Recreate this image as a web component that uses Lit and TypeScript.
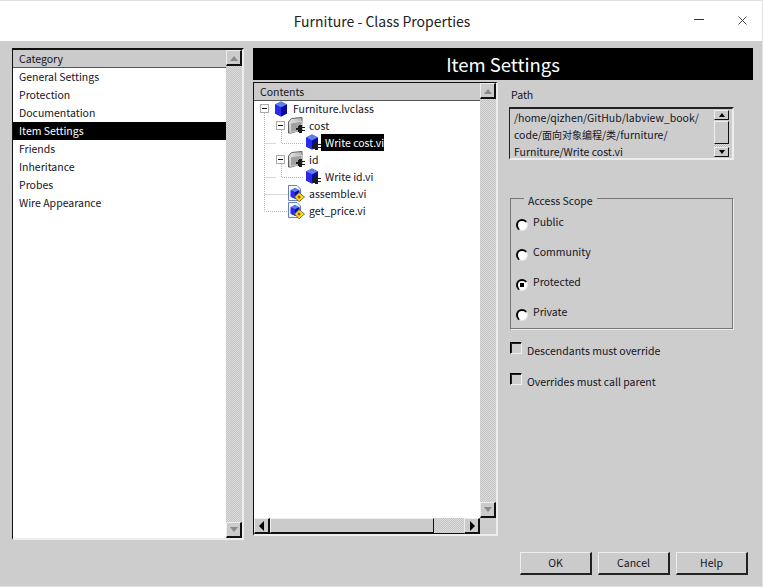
import { LitElement, html, css, svg } from "lit";
import { customElement } from "lit/decorators.js";

const cube = (x: number, y: number, s: number) => svg`
  <g transform="translate(${x} ${y}) scale(${s})">
    <path d="M7 0 L13 3 V12 L7 15 L1 12 V3 Z" fill="#1616d8"/>
    <path d="M7 0 L13 3 L7 6 L1 3 Z" fill="#5f7ff0"/>
    <path d="M7 6 L13 3 V12 L7 15 Z" fill="#0a0a9c"/>
    <path d="M1 3 L7 6 V15 L1 12 Z" fill="#2a2ae8"/>
  </g>`;
const plug = (x: number, y: number) => svg`
  <g transform="translate(${x} ${y})" fill="#1c1c1c">
    <path d="M0 3 H2 V1 H3 V0 H6 V2 H9 V3 H6 V5 H9 V6 H6 V8 H3 V7 H2 V5 H0 Z"/>
  </g>`;

const CubeIcon = html`<svg class="ico" width="15" height="16" viewBox="0 0 15 16">${cube(0, 0.500, 1)}</svg>`;
const FolderIcon = html`<svg class="ico" width="17" height="17" viewBox="0 0 17 17">
  <defs><linearGradient id="fg" x1="0" y1="0" x2="1" y2="1"><stop offset="0" stop-color="#f4f4f4"/><stop offset="1" stop-color="#808080"/></linearGradient></defs>
  <path d="M.5 5 L3.500 1.500 L14 .5 V13 L3 16 H.5 Z" fill="url(#fg)" stroke="#5e5e5e"/>
  <path d="M2.500 6 L14 4 V13 L2.500 15.500 Z" fill="#a0a0a0" stroke="#e8e8e8" stroke-width=".7"/>
  ${plug(8, 8)}
</svg>`;
const MethodIcon = html`<svg class="ico" width="16" height="17" viewBox="0 0 16 17">${cube(0, 0.500, 1)}${plug(7, 8)}</svg>`;
const ViIcon = html`<svg class="ico" width="17" height="17" viewBox="0 0 17 17">
  <path d="M.5 .5 H9 L12.500 4 V15.500 H.5 Z" fill="#f4f6ff" stroke="#6a7fc0"/>
  ${cube(2, 3, 0.72)}
  <path d="M11 7.500 L16.500 12 L11 16.800 L6.500 12 Z" fill="#f5e010" stroke="#444" stroke-width=".7"/>
  <path d="M9.500 12 H12.500 M11 10.500 V13.500" stroke="#a01010" stroke-width="1"/>
</svg>`;

@customElement("app-root")
export class AppRoot extends LitElement {
  static styles = css`
    :host { display: block; width: 763px; height: 587px; overflow: hidden; background: #cdcdcd;
      font: 10.5px "Noto Sans CJK SC", "Noto Sans", sans-serif; color: #14141f; line-height: 18px;
      border-right: 1px solid #e2e2e2; border-bottom: 1px solid #e2e2e2; box-sizing: border-box; }
    * { box-sizing: border-box; }
    .title { height: 41px; background: #fff; border-top: 1px solid #e2e2e2; display: flex; align-items: center; justify-content: center; position: relative; font-size: 14px; color: #222; padding-left: 2px; }
    .wm { position: absolute; right: 0; top: -1px; height: 41px; width: 92px; }
    .wm svg { display: block; width: 92px; height: 41px; }
    .main { display: flex; padding: 7px 9px 0 12px; gap: 9px; height: 504px; }
    .catbox { width: 232px; height: 492px; display: flex; border: 1px solid; border-color: #111 #eee #eee #111; border-width: 2px 2px 2px 1px; background: #fff; flex: none; }
    .list { flex: 1; min-width: 0; display: flex; flex-direction: column; }
    .hdr { height: 18px; background: #cbcbcb; border-bottom: 1px solid #555; padding-left: 6px; flex: none; line-height: 18px; }
    .row { height: 18px; padding-left: 6px; flex: none; }
    .row.sel { background: #000; color: #fff; }
    .vbar { width: 16px; display: flex; flex-direction: column; flex: none;
      background: repeating-conic-gradient(#c4c4c4 0 25%, #dcdcdc 0 50%) 0 0 / 2px 2px; }
    .vbar i { flex: 1; }
    .btn { width: 16px; height: 16px; flex: none; background: #cbcbcb; border: 1px solid; border-color: #eee #111 #111 #eee; border-width: 1px 2px 2px 1px; display: flex; align-items: center; justify-content: center; }
    .right { flex: 1; display: flex; flex-direction: column; gap: 2px; min-width: 0; }
    .banner { height: 32px; background: #000; color: #fff; font-size: 18.5px; display: flex; align-items: center; justify-content: center; flex: none; }
    .split { display: flex; flex: 1; gap: 11px; min-height: 0; }
    .cbox { width: 245px; height: 454px; border: 1px solid; border-color: #111 #eee #eee #111; border-width: 1px 2px 2px 1px; display: flex; flex-direction: column; background: #fff; flex: none; }
    .ctop { flex: 1; display: flex; min-height: 0; }
    .tree { padding: 0 0 0 6px; flex: 1; min-height: 0; position: relative; }
    .tree-nodes { position: relative; margin-top: -1px; }
    .node { display: flex; align-items: center; height: 17px; white-space: nowrap; }
    .exp { width: 9px; height: 9px; border: 1px solid #aaa; position: relative; flex: none; margin-right: 3px; background: #fff; }
    .exp::after { content: ""; position: absolute; left: 1px; right: 1px; top: 3px; height: 1px; background: #111; }
    .ico { flex: none; margin-right: 4px; }
    .root-exp { margin-right: 5px; }
    .l1 { padding-left: 16px; }
    .l2 { padding-left: 45px; }
    .l2 .ico { margin-right: 0; }
    .l1v { padding-left: 28px; }
    .lines { position: absolute; left: 0; top: 0; pointer-events: none; }
    .sel2 { background: #000; color: #fff; padding-left: 4px; height: 17px; line-height: 17px; }
    .plain { padding-left: 4px; }
    .hbarw { height: 16px; display: flex; flex: none; background: #cdcdcd; }
    .hbar { flex: 1; display: flex; background: repeating-conic-gradient(#c4c4c4 0 25%, #dcdcdc 0 50%) 0 0 / 2px 2px; border-bottom: 1px solid #111; }
    .thumb { width: 164px; background: #cbcbcb; border: 1px solid; border-color: #eee #111 #111 #eee; }
    .hbar i { flex: 1; }
    .corner { width: 16px; flex: none; background: #cdcdcd; }
    .props { width: 225px; display: flex; flex-direction: column; flex: none; }
    .plabel { padding: 4px 0 3px 2px; }
    .pathbox { height: 53px; border: 1px solid; border-color: #222 #eee #eee #222; border-width: 2px 2px 2px 1px; display: flex; padding: 0 0 0 4px; margin-bottom: 38px; overflow: hidden; }
    .ptext { flex: 1; line-height: 17px; white-space: nowrap; }
    .cjk { font-size: 10px; }
    .pbar { width: 15px; margin-right: 3px; display: flex; flex-direction: column; padding-top: 1px; }
    .sm { height: 10px; background: #cbcbcb; border: 1px solid; border-color: #eee #111 #111 #eee; flex: none; display: flex; align-items: center; justify-content: center; }
    .sm2 { height: 23px; margin-top: 1px; background: #cbcbcb; border: 1px solid; border-color: #eee #111 #111 #eee; flex: none; }
    .pgap { height: 3px; flex: none; background: repeating-conic-gradient(#b4b4b4 0 25%, #e4e4e4 0 50%) 0 0 / 2px 2px; }
    .group { height: 132px; border: 1px solid; border-color: #777 #eee #eee #777; box-shadow: inset -1px -1px 0 #777; position: relative; padding: 14px 0 0 5px; display: flex; flex-direction: column; margin-bottom: 12px; margin-left: 1px; }
    .legend { position: absolute; left: 13px; top: -6px; background: #cdcdcd; padding: 0 4px; line-height: 16px; }
    .radio { height: 30px; display: flex; align-items: flex-start; gap: 5px; flex: none; }
    .dot { width: 12px; height: 12px; border-radius: 50%; background: #fff; border: 1px solid; border-color: #000 #e4e4e4 #e4e4e4 #000; border-width: 2px 1px 1px 2px; margin-top: 6px; position: relative; flex: none; }
    .dot.on::after { content: ""; position: absolute; left: 2px; top: 2px; width: 4px; height: 4px; background: #000; }
    .check { display: flex; height: 31px; margin-left: 1px; gap: 5px; }
    .box { width: 12px; height: 12px; background: #cdcdcd; border: 1px solid; border-color: #000 #f0f0f0 #f0f0f0 #000; box-shadow: inset 1px 1px 0 #222; flex: none; }
    .footer { display: flex; justify-content: flex-end; gap: 6px; padding: 7px 14px 0 0; }
    .pb { width: 72px; height: 23px; background: #cbcbcb; border: 1px solid; border-color: #eee #222 #222 #eee; border-width: 1px 2px 2px 1px; display: flex; align-items: center; justify-content: center; line-height: 18px; }
  `;

  private up = html`<svg width="12" height="8" viewBox="0 0 12 8"><path d="M2 7 L6 2 L10 7 Z" fill="#8a8a8a"/></svg>`;
  private down = html`<svg width="12" height="8" viewBox="0 0 12 8"><path d="M2 1 L6 6 L10 1 Z" fill="#8a8a8a"/></svg>`;

  render() {
    const cats = ["General Settings", "Protection", "Documentation", "Item Settings", "Friends", "Inheritance", "Probes", "Wire Appearance"];
    return html`
      <div class="title">Furniture - Class Properties
        <div class="wm">
          <svg viewBox="0 0 92 41"><path d="M24 19.500 H34" stroke="#333"/><path d="M68.500 16.500 L76.500 24.500 M76.500 16.500 L68.500 24.500" stroke="#444" fill="none"/></svg>
        </div>
      </div>
      <div class="main">
        <div class="catbox">
          <div class="list">
            <div class="hdr">Category</div>
            ${cats.map((c) => html`<div class="row ${c === "Item Settings" ? "sel" : ""}">${c}</div>`)}
          </div>
          <div class="vbar"><div class="btn">${this.up}</div><i></i><div class="btn">${this.down}</div></div>
        </div>
        <div class="right">
          <div class="banner">Item Settings</div>
          <div class="split">
            <div class="cbox">
              <div class="ctop">
                <div class="list">
                  <div class="hdr">Contents</div>
                  <div class="tree">
                    <svg class="lines" width="120" height="130"><path d="M10.500 12 V110.500 H34 M10.500 42.500 H22 M10.500 76.500 H22 M27.500 29 V42.500 H50 M27.500 63 V76.500 H50 M10.500 93.500 H34" stroke="#b5b5b5" stroke-dasharray="1 1" fill="none"/></svg>
                    <div class="tree-nodes">
                      <div class="node"><span class="exp root-exp"></span>${CubeIcon}<span>Furniture.lvclass</span></div>
                      <div class="node l1"><span class="exp"></span>${FolderIcon}<span>cost</span></div>
                      <div class="node l2">${MethodIcon}<span class="sel2">Write cost.vi</span></div>
                      <div class="node l1"><span class="exp"></span>${FolderIcon}<span>id</span></div>
                      <div class="node l2">${MethodIcon}<span class="plain">Write id.vi</span></div>
                      <div class="node l1v">${ViIcon}<span>assemble.vi</span></div>
                      <div class="node l1v">${ViIcon}<span>get_price.vi</span></div>
                    </div>
                  </div>
                </div>
                <div class="vbar"><div class="btn">${this.up}</div><i></i><div class="btn">${this.down}</div></div>
              </div>
              <div class="hbarw">
                <div class="hbar">
                  <div class="btn"><svg width="6" height="10" viewBox="0 0 6 10"><path d="M5 0 V10 L0 5 Z" fill="#000"/></svg></div>
                  <div class="thumb"></div><i></i>
                  <div class="btn"><svg width="6" height="10" viewBox="0 0 6 10"><path d="M1 0 V10 L6 5 Z" fill="#000"/></svg></div>
                </div>
                <div class="corner"></div>
              </div>
            </div>
            <div class="props">
              <div class="plabel">Path</div>
              <div class="pathbox">
                <div class="ptext">/home/qizhen/GitHub/labview_book/<br>code/<span class="cjk">面向对象编程</span>/<span class="cjk">类</span>/furniture/<br>Furniture/Write cost.vi</div>
                <div class="pbar">
                  <div class="sm"><svg width="6" height="4" viewBox="0 0 6 4"><path d="M0 4 L3 0 L6 4 Z"/></svg></div>
                  <div class="sm2"></div><div class="pgap"></div>
                  <div class="sm"><svg width="6" height="4" viewBox="0 0 6 4"><path d="M0 0 L3 4 L6 0 Z"/></svg></div>
                </div>
              </div>
              <div class="group">
                <div class="legend">Access Scope</div>
                ${["Public", "Community", "Protected", "Private"].map(
                  (r) => html`<div class="radio"><div class="dot ${r === "Protected" ? "on" : ""}"></div><span>${r}</span></div>`
                )}
              </div>
              <div class="check"><div class="box"></div><span>Descendants must override</span></div>
              <div class="check"><div class="box"></div><span>Overrides must call parent</span></div>
            </div>
          </div>
        </div>
      </div>
      <div class="footer">
        <div class="pb">OK</div><div class="pb">Cancel</div><div class="pb">Help</div>
      </div>
    `;
  }
}
